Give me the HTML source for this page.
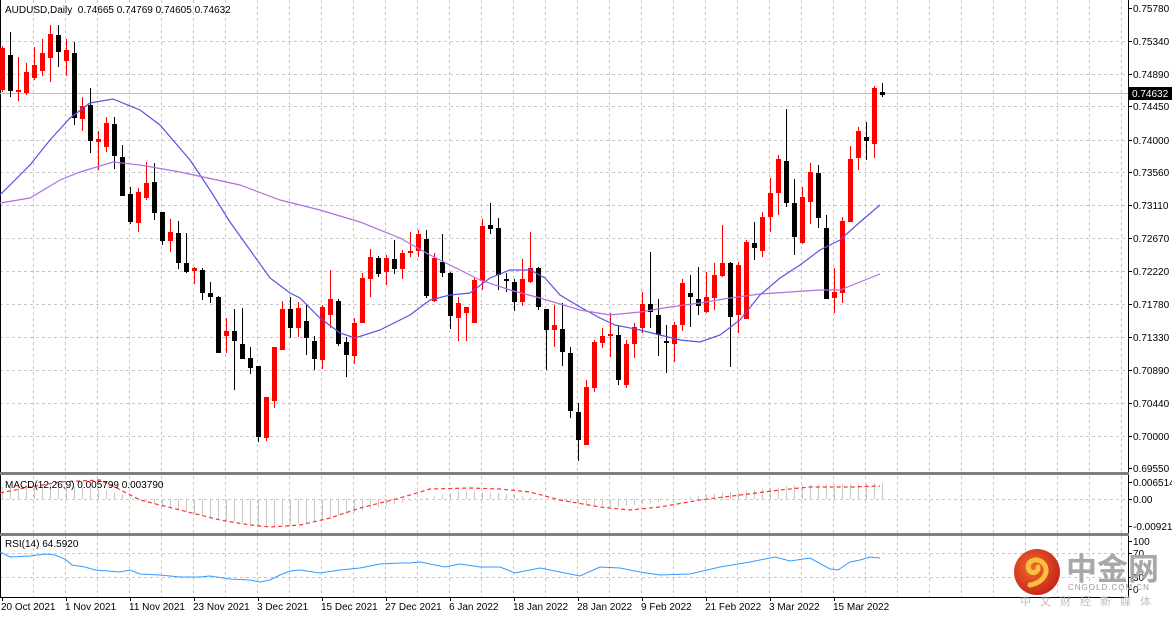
<!DOCTYPE html>
<html><head><meta charset="utf-8"><style>
body{margin:0;width:1172px;height:614px;overflow:hidden;background:#fff;font-family:"Liberation Sans",sans-serif}
svg text{font-family:"Liberation Sans","DejaVu Sans",sans-serif;font-size:10px;fill:#000}
</style></head><body>
<svg id="s" width="1172" height="614" xmlns="http://www.w3.org/2000/svg">
<rect width="1172" height="614" fill="#fff"/>
<g id="grid" stroke="#c8c8c8" stroke-dasharray="3,3" stroke-width="1"></g>
<g fill="none" stroke="#000">
<line x1="0.5" y1="0" x2="0.5" y2="598"/>
<line x1="1128.5" y1="0" x2="1128.5" y2="598"/>
<line x1="0" y1="597.5" x2="1129" y2="597.5"/>
</g>
<rect x="0" y="472" width="1129" height="3" fill="#808080"/>
<rect x="0" y="533" width="1129" height="3" fill="#808080"/>
<line x1="0" y1="93.5" x2="1128" y2="93.5" stroke="#c0c0c0"/>
<g id="macd"></g>
<g id="candles"></g>
<polyline fill="none" stroke="#5555dd" stroke-width="1.2" points="0,195 30,165 50,140 70,118 90,103 113,99 140,110 160,125 190,160 210,190 230,222 250,250 270,278 290,293 300,298 320,318 340,333 355,338 380,330 410,315 430,300 450,295 470,293 490,278 510,270 530,270 545,278 560,295 580,307 600,318 615,325 640,330 660,335 680,340 700,342 720,335 740,320 760,295 780,278 800,265 820,250 840,240 860,222 880,205"/>
<polyline fill="none" stroke="#b070e0" stroke-width="1.2" points="0,203 30,198 60,180 80,172 113,162 140,165 180,172 240,185 280,200 320,210 360,222 400,238 430,255 460,270 480,280 510,290 540,298 580,310 610,315 640,312 670,307 700,303 730,298 760,294 790,292 820,290 840,290 860,282 880,274"/>
<polyline fill="none" stroke="#ff3030" stroke-width="1.2" stroke-dasharray="4,3" points="0,493 30,487 60,482 100,480 115,487 140,500 180,510 220,520 250,525 270,527 300,525 330,518 360,508 400,498 430,489 470,488 500,489 530,492 560,500 600,507 630,510 660,507 700,500 740,495 780,490 810,487 850,487 880,486"/>
<polyline fill="none" stroke="#3399ff" stroke-width="1" points="0,552 10,557 30,556 45,554 55,555 65,559 72,565 85,567 95,570 120,572 130,570 140,574 160,575 180,577 200,577 210,576 230,579 250,580 260,582 270,580 280,575 290,571 300,570 320,573 340,570 360,568 380,564 400,563 410,563 420,562 445,567 460,564 480,567 500,567 515,573 540,568 560,572 580,576 600,567 620,568 640,572 660,575 690,574 720,567 750,562 775,557 790,561 810,558 830,569 838,570 850,562 860,560 870,557 880,558"/>
<text x="5" y="13">AUDUSD,Daily&#160;&#160;0.74665 0.74769 0.74605 0.74632</text>
<text x="5" y="488">MACD(12,26,9) 0.005799 0.003790</text>
<text x="5" y="547">RSI(14) 64.5920</text>
<g id="axis"></g>
<rect x="1129" y="87" width="43" height="13" fill="#000"/>
<text x="1132" y="97" style="fill:#fff">0.74632</text>
<defs><radialGradient id="g1" cx="40%" cy="40%" r="60%"><stop offset="0" stop-color="#f06a2a"/><stop offset="1" stop-color="#c8281a"/></radialGradient></defs>
<circle cx="1037" cy="572" r="23" fill="url(#g1)"/>
<path d="M1030,585 C1045,582 1050,570 1043,563 C1036,556 1025,562 1029,570 C1032,575 1039,572 1038,567" fill="none" stroke="#f7c040" stroke-width="5" stroke-linecap="round"/>
<text x="1066" y="580" style="font-size:31px;fill:#a8a8a8;font-family:'Noto Sans CJK SC',sans-serif;font-weight:bold">中金网</text>
<text x="1068" y="590" style="font-size:8px;fill:#9a9a9a;letter-spacing:1px">CNGOLD.COM.CN</text>
<text x="1020" y="605" style="font-size:11px;fill:#c0c0c0;font-family:'Noto Sans CJK SC',sans-serif;letter-spacing:9px">中文财经新媒体</text>
</svg>
<script>
var NS="http://www.w3.org/2000/svg";
function el(p,t,a,txt){var e=document.createElementNS(NS,t);for(var k in a)e.setAttribute(k,a[k]);if(txt)e.textContent=txt;document.getElementById(p).appendChild(e);return e;}
for(var x=33;x<1128;x+=32){el('grid','line',{x1:x+.5,y1:0,x2:x+.5,y2:472});el('grid','line',{x1:x+.5,y1:476,x2:x+.5,y2:533});el('grid','line',{x1:x+.5,y1:536,x2:x+.5,y2:597});}
var hy=[41,74,106,140,172,205,238,271,304,337,370,403,436];
hy.forEach(function(y){el('grid','line',{x1:0,y1:y+.5,x2:1128,y2:y+.5});});
[499,553,577].forEach(function(y){el('grid','line',{x1:0,y1:y+.5,x2:1128,y2:y+.5});});
var lab=[["0.75780",8],["0.75340",41],["0.74890",74],["0.74450",106],["0.74000",140],["0.73560",172],["0.73110",205],["0.72670",238],["0.72220",271],["0.71780",304],["0.71330",337],["0.70890",370],["0.70440",403],["0.70000",436],["0.69550",468],["0.006514",482],["0.00",499],["-0.009213",526],["100",541],["70",553],["30",577],["0",589]];
lab.forEach(function(l){el('axis','line',{x1:1129,y1:l[1]+.5,x2:1132,y2:l[1]+.5,stroke:'#000'});el('axis','text',{x:1133,y:l[1]+4},l[0]);});
var dates=[["20 Oct 2021",2],["1 Nov 2021",66],["11 Nov 2021",130],["23 Nov 2021",194],["3 Dec 2021",258],["15 Dec 2021",322],["27 Dec 2021",386],["6 Jan 2022",450],["18 Jan 2022",514],["28 Jan 2022",578],["9 Feb 2022",642],["21 Feb 2022",706],["3 Mar 2022",770],["15 Mar 2022",834]];
dates.forEach(function(d){el('axis','line',{x1:d[1]+.5,y1:597,x2:d[1]+.5,y2:601,stroke:'#000'});el('axis','text',{x:d[1]-1,y:610},d[0]);});
var C=[
['r',48,90,46,92],['b',55,91,32,97],['r',90,92,57,101],['r',72,93,63,95],['r',65,78,47,80],['r',53,71,39,76],['r',34,58,25,82],['b',35,52,25,67],['r',50,61,39,76],['b',53,118,42,125],
['r',106,119,97,131],['b',105,141,88,153],['r',139,142,131,170],['r',123,147,117,152],['b',124,156,117,169],['b',157,196,145,196],['b',194,222,187,224],['r',192,223,188,232],['r',183,198,162,200],['b',182,213,163,220],
['b',212,241,212,245],['r',232,241,219,252],['b',233,263,221,269],['b',263,272,233,273],['r',268,271,267,284],['b',270,293,268,300],['b',293,297,282,303],['b',297,353,296,353],['r',331,336,318,353],['b',331,341,309,390],
['b',344,359,308,359],['b',358,368,347,374],['b',366,437,366,442],['r',397,438,397,441],['r',347,401,347,408],['r',309,350,301,350],['b',309,328,297,338],['r',308,328,302,337],['b',321,338,305,355],['b',341,359,336,370],
['r',307,360,305,369],['r',299,315,270,328],['b',301,344,299,346],['b',342,355,337,377],['r',323,356,318,364],['r',278,323,273,323],['r',257,279,249,297],['b',258,274,256,277],['r',258,272,255,285],['b',259,269,240,274],
['r',253,269,250,279],['r',251,253,232,257],['r',234,251,230,257],['b',239,296,230,298],['r',258,301,253,302],['b',262,273,234,277],['b',273,316,272,329],['r',303,318,297,341],['r',307,313,307,341],['r',280,323,278,323],
['r',226,281,219,290],['b',225,229,203,234],['b',228,275,218,290],['b',279,281,273,292],['b',282,302,279,311],['r',279,302,259,306],['r',268,282,232,283],['b',268,307,267,310],['b',309,330,309,370],['r',325,330,305,347],
['b',329,352,303,366],['b',353,411,347,418],['b',412,440,403,461],['r',387,445,380,445],['r',342,388,340,392],['r',336,343,328,348],['r',334,336,313,357],['b',335,380,325,385],['r',344,385,340,388],['r',327,344,323,358],
['r',304,328,292,333],['b',304,312,252,328],['b',315,335,299,356],['b',341,343,325,373],['r',325,344,322,362],['r',283,325,279,331],['b',293,297,275,327],['b',299,306,267,315],['r',297,312,272,313],['r',275,298,263,310],
['r',263,276,225,277],['b',263,317,262,367],['r',265,315,262,333],['r',242,319,240,319],['b',243,248,222,260],['r',217,251,212,257],['r',193,217,178,232],['r',159,193,155,215],['b',161,203,109,207],['b',203,237,179,255],
['r',197,243,187,244],['r',172,202,163,224],['b',173,218,165,228],['b',228,299,215,299],['r',292,298,268,313],['r',221,293,217,303],['r',159,222,146,222],['r',131,158,127,170],['b',137,141,122,160],['r',88,144,86,158],['b',92,95,83,97]];
C.forEach(function(c,i){var x=2+8*i;var col=c[0]=='r'?'#ff0000':'#000';
el('candles','line',{x1:x+.5,y1:c[3],x2:x+.5,y2:c[4],stroke:col});
el('candles','rect',{x:x-2,y:c[1],width:5,height:Math.max(1,c[2]-c[1]),fill:col});});
var n=C.length;
function macdv(i){var x=2+8*i;var pts=[[0,-12],[60,-14],[110,-8],[140,2],[200,16],[260,28],[300,25],[360,12],[420,0],[460,-8],[500,-6],[540,0],[580,6],[620,8],[660,3],[700,-4],[760,-10],[800,-14],[880,-16]];
for(var k=0;k<pts.length-1;k++){if(x>=pts[k][0]&&x<=pts[k+1][0]){var t=(x-pts[k][0])/(pts[k+1][0]-pts[k][0]);return pts[k][1]+t*(pts[k+1][1]-pts[k][1]);}}return -16;}
for(var i=0;i<n;i++){var x=2+8*i,v=macdv(i);el('macd','line',{x1:x+.5,y1:499,x2:x+.5,y2:499+v,stroke:'#c8c8c8'});}
</script>
</body></html>
